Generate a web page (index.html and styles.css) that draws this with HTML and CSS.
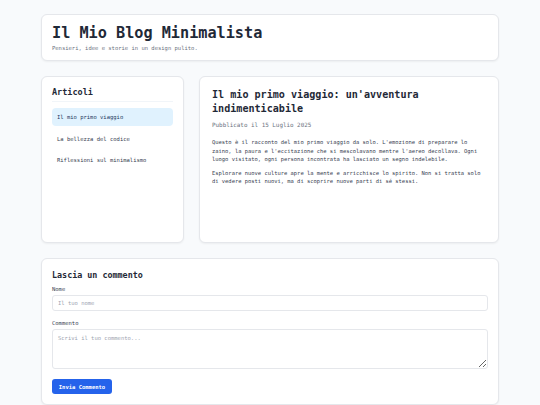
FILE: index.html
```html
<!DOCTYPE html>
<html lang="it">
<head>
<meta charset="utf-8">
<title>Il Mio Blog Minimalista</title>
<link rel="stylesheet" href="styles.css">
</head>
<body>
<div class="page">
  <header class="card header">
    <h1 class="site-title">Il Mio Blog Minimalista</h1>
    <p class="tagline">Pensieri, idee e storie in un design pulito.</p>
  </header>
  <div class="main">
    <aside class="card sidebar">
      <h2 class="side-title">Articoli</h2>
      <ul class="post-list">
        <li class="post-item active">Il mio primo viaggio</li>
        <li class="post-item">La bellezza del codice</li>
        <li class="post-item">Riflessioni sul minimalismo</li>
      </ul>
    </aside>
    <article class="card article">
      <h2 class="article-title">Il mio primo viaggio: un'avventura indimenticabile</h2>
      <p class="meta">Pubblicato il 15 Luglio 2025</p>
      <p class="para">Questo è il racconto del mio primo viaggio da solo. L'emozione di preparare lo zaino, la paura e l'eccitazione che si mescolavano mentre l'aereo decollava. Ogni luogo visitato, ogni persona incontrata ha lasciato un segno indelebile.</p>
      <p class="para">Esplorare nuove culture apre la mente e arricchisce lo spirito. Non si tratta solo di vedere posti nuovi, ma di scoprire nuove parti di sé stessi.</p>
    </article>
  </div>
  <section class="card comments">
    <h3 class="comment-title">Lascia un commento</h3>
    <label class="label" for="nome">Nome</label>
    <input class="input" id="nome" type="text" placeholder="Il tuo nome">
    <label class="label" for="commento">Commento</label>
    <textarea class="textarea" id="commento" placeholder="Scrivi il tuo commento..."></textarea>
    <button class="btn" type="button">Invia Commento</button>
  </section>
</div>
</body>
</html>
```
FILE: styles.css
```css
* { box-sizing: border-box; }
html, body { margin: 0; padding: 0; }
body {
  background: #f8fafc;
  font-family: "DejaVu Sans Mono", "Liberation Mono", monospace;
  color: #1f2937;
}
.page {
  width: 458px;
  margin: 0 auto;
  padding-top: 14px;
  display: flex;
  flex-direction: column;
  gap: 15px;
}
.card {
  background: #fff;
  border: 1px solid #e5e7eb;
  border-radius: 6px;
  box-shadow: 0 1px 2px rgba(0,0,0,0.05);
}
.header {
  height: 47px;
  padding: 8px 10px 0;
}
.site-title {
  margin: 0;
  font-size: 15.2px;
  line-height: 20px;
  font-weight: bold;
  color: #1f2937;
}
.tagline {
  margin: 1px 0 0;
  font-size: 5.5px;
  line-height: 8px;
  color: #6b7280;
}
.main {
  display: grid;
  grid-template-columns: 143px 1fr;
  gap: 15px;
  height: 167px;
}
.sidebar { padding: 9px 10px; }
.side-title {
  margin: 0;
  font-size: 8.5px;
  line-height: 13px;
  font-weight: bold;
  padding-bottom: 2px;
  border-bottom: 1px solid #f1f5f9;
}
.post-list {
  list-style: none;
  margin: 6px 0 0;
  padding: 0;
  display: flex;
  flex-direction: column;
  gap: 3.5px;
}
.post-item {
  height: 18px;
  line-height: 18px;
  padding-left: 5px;
  font-size: 5.5px;
  color: #374151;
  border-radius: 4px;
}
.post-item.active {
  background: #e0f2fe;
  color: #1e3a5f;
}
.article { padding: 11px 13px 11px 12px; }
.article-title {
  margin: 0;
  font-size: 10.1px;
  line-height: 13.5px;
  font-weight: bold;
  color: #1f2937;
}
.meta {
  margin: 6px 0 8px;
  font-size: 5.9px;
  line-height: 9px;
  color: #6b7280;
}
.para {
  margin: 0 0 5px;
  font-size: 5.45px;
  line-height: 8.6px;
  color: #374151;
}
.comments {
  padding: 10px 10px 10px;
  display: flex;
  flex-direction: column;
  align-items: flex-start;
}
.comment-title {
  margin: 0 0 4px;
  font-size: 8.4px;
  line-height: 12px;
  font-weight: bold;
}
.label {
  font-size: 5.5px;
  line-height: 8px;
  color: #374151;
  margin-bottom: 2px;
}
.input, .textarea {
  width: 100%;
  border: 1px solid #e5e7eb;
  border-radius: 3px;
  font-family: inherit;
  font-size: 5.5px;
  padding: 0 5px;
  color: #374151;
  background: #fff;
}
.input::placeholder, .textarea::placeholder { color: #9ca3af; }
.input { height: 16px; margin-bottom: 8px; }
.textarea { height: 40px; padding-top: 5px; resize: vertical; margin-bottom: 10px; display: block; }
.btn {
  width: 60px;
  height: 15px;
  border: none;
  border-radius: 3px;
  background: #2563eb;
  color: #fff;
  font-family: inherit;
  font-size: 5.5px;
  font-weight: bold;
  padding: 0;
}
```
